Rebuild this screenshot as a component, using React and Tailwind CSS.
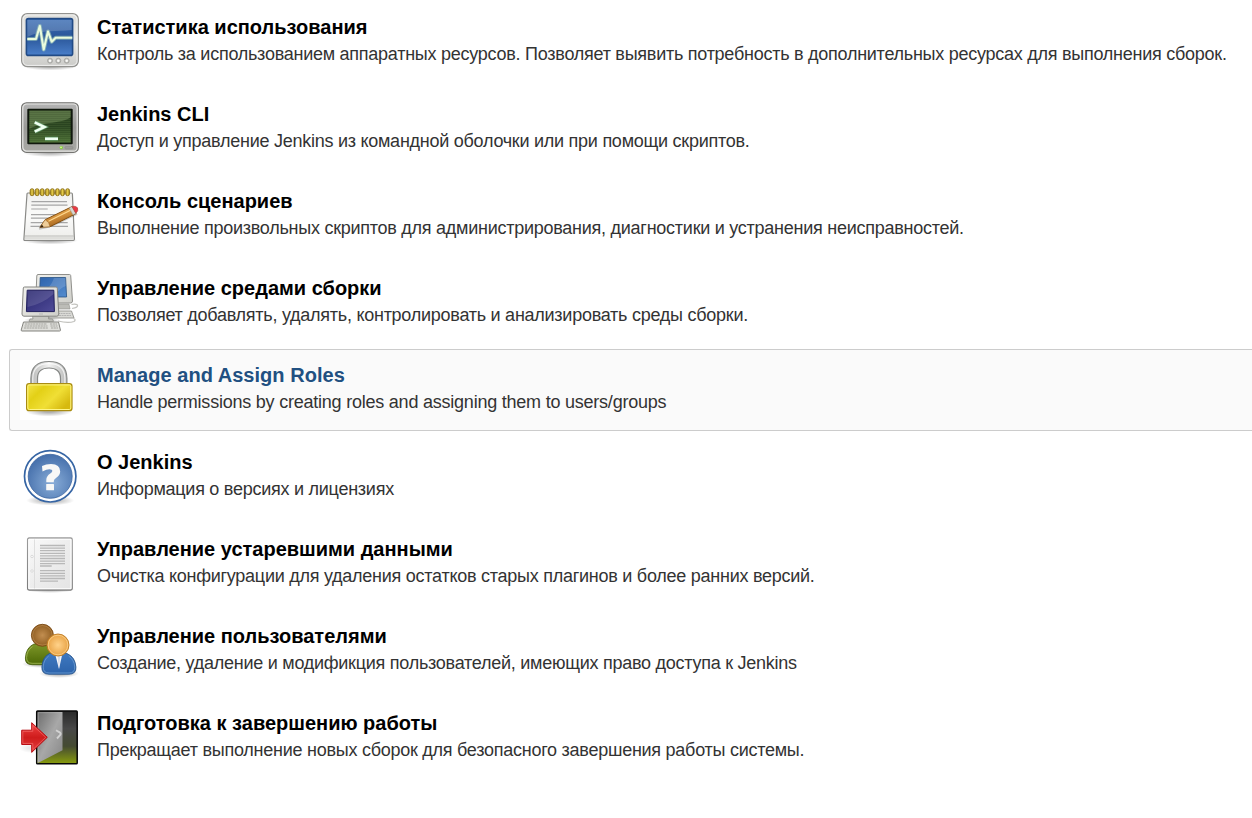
import React from 'react';

function Gradient({ id, stops, x1 = 0, y1 = 0, x2 = 0, y2 = 1 }) {
  return (
    <linearGradient id={id} x1={x1} y1={y1} x2={x2} y2={y2}>
      {stops.map((c, i) => (
        <stop key={i} offset={i / (stops.length - 1)} stopColor={c} />
      ))}
    </linearGradient>
  );
}

function Icon({ id, children, className = '' }) {
  return (
    <span className={`block h-[60px] w-[60px] shrink-0 ${className}`}>
      <svg viewBox="0 0 60 60" className="block h-[60px] w-[60px] blur-[0.4px]" aria-hidden="true">
        <defs>
          <radialGradient id={`${id}-shadow`}>
            <stop offset="0.2" stopColor="#000" stopOpacity="0.3" />
            <stop offset="1" stopColor="#000" stopOpacity="0" />
          </radialGradient>
        </defs>
        {children}
      </svg>
    </span>
  );
}

function MonitorIcon() {
  return (
    <Icon id="mon">
      <defs>
        <Gradient id="mon-frame" stops={['#dededb', '#e9e9e6', '#cbcbc8']} />
        <Gradient id="mon-screen" stops={['#3a6db4', '#2a5699', '#4a7fca']} />
      </defs>
      <ellipse cx="30" cy="54.5" rx="27" ry="4" fill="url(#mon-shadow)" />
      <rect x="1.7" y="1.7" width="56.6" height="52.9" rx="5.5" fill="url(#mon-frame)" stroke="#92928f" strokeWidth="1.3" />
      <rect x="2.9" y="2.9" width="54.2" height="50.5" rx="4.5" fill="none" stroke="#fff" strokeOpacity="0.7" />
      <rect x="6.4" y="6.6" width="46.2" height="36.8" rx="2" fill="url(#mon-screen)" stroke="#214a85" strokeWidth="1.6" />
      <path d="M7.3 8h44.4v10C38 20 22 17 7.3 25z" fill="#fff" opacity="0.18" />
      <path d="M7.3 27H16l3.8-13 3.9 23.5L28 19.500l3.700 10.200 4-4h16.600" fill="none" stroke="#a9d5bd" strokeOpacity="0.55" strokeWidth="4" strokeLinejoin="round" />
      <path d="M7.3 27H16l3.8-13 3.9 23.5L28 19.500l3.700 10.200 4-4h16.600" fill="none" stroke="#eafbdc" strokeWidth="2.1" strokeLinejoin="round" />
      {[30, 38.3, 46.7].map((x) => (
        <g key={x}>
          <circle cx={x} cy="48.7" r="2.5" fill="#bcbcb8" stroke="#a2a29f" strokeWidth="0.8" />
          <circle cx={x} cy="48.7" r="1.3" fill="#fafaf8" />
        </g>
      ))}
    </Icon>
  );
}

function TerminalIcon() {
  return (
    <Icon id="term">
      <defs>
        <Gradient id="term-frame" stops={['#b4b4b4', '#9b9b98', '#a9a9a5']} />
        <Gradient id="term-screen" stops={['#2b421f', '#2a4420', '#4a6c34']} />
        <pattern id="term-lines" width="3" height="2" patternUnits="userSpaceOnUse">
          <rect width="3" height="0.8" fill="#9bbd74" opacity="0.13" />
        </pattern>
      </defs>
      <ellipse cx="30" cy="53.5" rx="28" ry="4.5" fill="url(#term-shadow)" />
      <rect x="1.6" y="3.8" width="56.8" height="49.6" rx="5" fill="url(#term-frame)" stroke="#747471" strokeWidth="1.2" />
      <rect x="2.8" y="5" width="54.4" height="47.2" rx="4" fill="none" stroke="#e6e6e4" strokeWidth="1.2" />
      <rect x="7.3" y="9.7" width="45.4" height="35.6" rx="1" fill="#10180d" />
      <rect x="9.3" y="11.6" width="41.4" height="32" fill="url(#term-screen)" />
      <rect x="9.3" y="11.6" width="41.4" height="32" fill="url(#term-lines)" />
      <path d="M9.3 11.6h41.4V18C43 25 23 22 9.3 30z" fill="#c2df9b" opacity="0.25" />
      <path d="M14.7 23.3l9.800 4.700-9.800 4.700M25 39.700h13" fill="none" stroke="#78c08d" strokeOpacity="0.6" strokeWidth="4" />
      <path d="M14.7 23.3l9.800 4.700-9.800 4.700M25 39.700h13" fill="none" stroke="#f0fff2" strokeWidth="2.6" />
      <circle cx="41.3" cy="48.6" r="1.7" fill="#84ce38" />
      <circle cx="41" cy="48.4" r="0.8" fill="#dcffad" />
      <rect x="45" y="47.5" width="8" height="2.500" rx="1" fill="#9c9c99" stroke="#8b8b88" strokeWidth="0.6" />
    </Icon>
  );
}

function NotepadIcon() {
  return (
    <Icon id="pad">
      <defs>
        <Gradient id="pad-paper" stops={['#f1f1ef', '#fbfbfa', '#ececea']} />
        <Gradient id="pad-ring" x2={1} y2={0} stops={['#a58a1c', '#e6cc4c', '#9a7c14']} />
        <Gradient id="pad-pencil" x2={0.5} y2={1} stops={['#f4b95c', '#dc9a43', '#9e5d19']} />
      </defs>
      <ellipse cx="30" cy="54.500" rx="28" ry="4" fill="url(#pad-shadow)" />
      <path d="M7.800 7h43.700q.8 0 .9 1l2 45q0 1.500-1.200 1.500H5Q3.700 54.500 3.900 53L7 8q0-1 .8-1z" fill="url(#pad-paper)" stroke="#8a8a87" strokeWidth="1.200" />
      <path d="M4.800 50h48.800" stroke="#b4b4b1" strokeWidth="0.9" />
      <path d="M5 51h48.500v2.500H4.800z" fill="#dededb" />
      <path d="M11.500 15.700h35.500M11.300 19.100h36.200M11.200 23h16.500M11 28.700h36M10.900 32.200h35M10.700 36.700h37M10.500 40.400h37.500" stroke="#a6a6a6" strokeWidth="1.200" />
      {[0, 1, 2, 3, 4, 5, 6, 7].map((n) => (
        <rect key={n} x={10.100 + n * 5.080} y="2.700" width="3.900" height="7" rx="1.900" fill="url(#pad-ring)" stroke="#86690f" strokeWidth="0.8" />
      ))}
      <path d="M19 42.500q8-1 17-5L57 27.500" fill="none" stroke="#000" strokeOpacity="0.2" strokeWidth="2.500" />
      <path d="M20 41.200l5.200-7.500L52 20.600l4 7L30 40.700z" fill="url(#pad-pencil)" stroke="#855011" strokeWidth="1" />
      <path d="M20 41.200l5.200-7.500 3.300 2.700 1.500 4.300z" fill="#efce9a" stroke="#9d6a30" strokeWidth="0.5" />
      <path d="M19.700 41.600l2.300-3.200 1.500 2.500z" fill="#38250f" />
      <path d="M28.500 35.200l22.500-11.200" stroke="#ffd990" strokeWidth="1.200" />
      <path d="M49.200 22l3-1.500 3.800 6.800-3 1.600z" fill="#d7d7d2" stroke="#95958f" strokeWidth="0.5" />
      <path d="M52 20.600q3.500-1.300 5.500 1.200 1.200 3-1.700 5.500z" fill="#ec3945" stroke="#aa4b40" strokeWidth="0.7" />
    </Icon>
  );
}

function ComputersIcon() {
  return (
    <Icon id="pcs">
      <defs>
        <Gradient id="pcs-frame" x2={1} stops={['#f0f0ec', '#cfcfca']} />
        <Gradient id="pcs-blue" x2={1} stops={['#2f64ad', '#548cce']} />
        <Gradient id="pcs-navy" x2={1} stops={['#26246d', '#504c98']} />
      </defs>
      <path d="M52 35.500q6.500-1 5.500-3.500-2-1.500-6-.500" fill="none" stroke="#c3c3bf" strokeWidth="1.200" />
      <path d="M28 38h23.500l2.500 7H29z" fill="#dadad6" stroke="#93938f" strokeWidth="0.9" />
      <path d="M38 40.500h13M39 42.500h12" stroke="#aaa" strokeWidth="0.8" strokeDasharray="2 0.600" />
      <path d="M36 31h13l1 5H36z" fill="#bcbcb7" stroke="#8f8f8a" strokeWidth="0.6" />
      <path d="M18 1.500h31.500q1 0 1.200 1l1.800 25.500q0 2-2 2h-33q-2 0-1.800-2l1.100-25q0-1.500 1.200-1.500z" fill="url(#pcs-frame)" stroke="#8f8f8b" />
      <path d="M20.200 4.500H45.600l1 19.500H19.500z" fill="url(#pcs-blue)" stroke="#285385" strokeWidth="0.8" />
      <path d="M34 5h11.300l.5 8q-6 2-10 9H20l.5-3q10-3 13.500-14z" fill="#fff" opacity="0.15" />
      <path d="M38 48q10 2.500 16 .500 2.500-2-.500-3" fill="none" stroke="#c0c0bc" strokeWidth="1.200" />
      <ellipse cx="22" cy="47" rx="18" ry="3" fill="url(#pcs-shadow)" />
      <path d="M12.500 43h16v3h4l1 2.300H9l1-2.300h3z" fill="#c7c7c2" stroke="#888883" strokeWidth="0.7" />
      <path d="M4.600 14h31.400q1.200 0 1.300 1.200l1.500 25.800q0 2.200-2 2.200H4q-2 0-2-2.200L3.300 15q0-1 1.300-1z" fill="url(#pcs-frame)" stroke="#858581" />
      <path d="M7.200 17.200h26.600l.600 21.400H6.400z" fill="url(#pcs-navy)" stroke="#201e5c" strokeWidth="1" />
      <path d="M7.500 34q15-3 26-13V18H7.500z" fill="#fff" opacity="0.13" />
      <path d="M19 41h4" stroke="#aaa" strokeWidth="0.7" />
      <path d="M3.500 49h35l2 8.300q0 .700-1 .700h-37.500q-1 0-.800-1z" fill="#e0e0dc" stroke="#83837e" strokeWidth="1" />
      <path d="M5 51h22M4.500 53h23M4 55h24M30 51h7M30.500 53h7M31 55h7" stroke="#a3a39e" strokeWidth="1" strokeDasharray="2.200 0.500" />
    </Icon>
  );
}

function LockIcon() {
  return (
    <Icon id="lock" className="bg-white">
      <defs>
        <Gradient id="lock-body" x2={1} y2={0.6} stops={['#f5e64c', '#e3d016', '#f0df35', '#d6b90f']} />
        <Gradient id="lock-shackle" x2={1} y2={0} stops={['#b7b8b7', '#f3f3f2', '#b9bab9']} />
      </defs>
      <ellipse cx="29" cy="51.500" rx="23" ry="5" fill="url(#lock-shadow)" />
      <path d="M10.900 24V18.500C11 7 18 1.500 29 1.500S46.800 7 46.900 18.500V24H40.500V18.500C40.500 11 36 8 29 8s-11.500 3-11.500 10.500V24z" fill="url(#lock-shackle)" stroke="#868886" strokeWidth="1.200" />
      <path d="M12.800 23V18C13 8 19 3.600 29 3.600S44.600 8 44.900 18v5" fill="none" stroke="#fff" strokeOpacity="0.75" strokeWidth="1.200" />
      <rect x="6.600" y="23.700" width="45.400" height="27" rx="2.500" fill="url(#lock-body)" stroke="#a98c12" strokeWidth="1.200" />
      <rect x="7.800" y="24.900" width="43" height="24.600" rx="1.500" fill="none" stroke="#fff688" strokeWidth="1" />
    </Icon>
  );
}

function HelpIcon() {
  return (
    <Icon id="help">
      <defs>
        <radialGradient id="help-blue" cx="0.55" cy="0.65" r="0.65">
          <stop stopColor="#89add8" />
          <stop offset="1" stopColor="#456fab" />
        </radialGradient>
      </defs>
      <ellipse cx="30.300" cy="53.500" rx="24" ry="5" fill="url(#help-shadow)" />
      <circle cx="30.200" cy="29.300" r="25.700" fill="#fff" stroke="#3665a4" strokeWidth="1.700" />
      <circle cx="30.200" cy="29.300" r="22" fill="url(#help-blue)" stroke="#3b659f" strokeWidth="0.8" />
      <path d="M22 18.900q4-2 9-2 9.200 0 9.200 7.600 0 3.600-4.200 6.500-2.200 1.500-2.200 2.900v1.300H26.300v-2.300q0-3.700 4-6.300 2-1.300 2-2.500 0-1.900-2.800-1.900-2.900 0-7 2.200z" fill="#f8f8f7" />
      <rect x="26.200" y="37" width="7.800" height="6.300" rx="0.500" fill="#f8f8f7" />
    </Icon>
  );
}

function DocumentIcon() {
  return (
    <Icon id="doc">
      <defs>
        <Gradient id="doc-paper" x2={1} stops={['#fafafa', '#ededed', '#e4e4e4']} />
        <Gradient id="doc-edge" stops={['#9c9c9c', '#7b7b7b']} />
      </defs>
      <ellipse cx="30" cy="55.500" rx="25" ry="3.500" fill="url(#doc-shadow)" />
      <rect x="7.600" y="4" width="44.600" height="52" rx="1.500" fill="url(#doc-paper)" stroke="url(#doc-edge)" strokeWidth="1.300" />
      <rect x="8.800" y="5.200" width="42.200" height="49.600" rx="0.800" fill="none" stroke="#fff" strokeWidth="1.100" />
      <path d="M14.500 5.500v49" stroke="#d4d4d4" strokeWidth="0.7" />
      {[22.500, 37].map((y) => (
        <circle key={y} cx="12" cy={y} r="1.200" fill="#fff" stroke="#ccc" strokeWidth="0.7" />
      ))}
      <path d="M20 11.500h25M20 14.100h25M20 16.700h25M20 19.300h25M20 21.900h25M20 24.500h25M20 27.100h25M20 29.700h25M20 32h11.700M20 36.700h25M20 39.300h25M20 41.900h25M20 44.500h25M20 47.100h18" stroke="#b8b8b8" strokeWidth="1.300" />
    </Icon>
  );
}

function UsersIcon() {
  return (
    <Icon id="users">
      <defs>
        <radialGradient id="users-brown">
          <stop stopColor="#c28e50" />
          <stop offset="1" stopColor="#905e22" />
        </radialGradient>
        <radialGradient id="users-orange">
          <stop stopColor="#ffd28a" />
          <stop offset="1" stopColor="#e8a244" />
        </radialGradient>
        <Gradient id="users-green" stops={['#7d9628', '#4c6805']} />
        <Gradient id="users-blue" stops={['#3e78bf', '#2c63ab']} />
      </defs>
      <ellipse cx="22" cy="43" rx="20" ry="4" fill="url(#users-shadow)" />
      <ellipse cx="39" cy="52.500" rx="20" ry="4.500" fill="url(#users-shadow)" />
      <path d="M14 23q-8 3.500-8.600 14-.400 6.700 7 6.700h21q7 0 6.500-7Q39 26 29 23z" fill="url(#users-green)" stroke="#4e6613" strokeWidth="0.9" />
      <path d="M12.500 25.500q-5.700 4-5.900 11-.100 5.800 5.500 5.800h13" fill="none" stroke="#a6bd5a" strokeWidth="0.8" />
      <circle cx="22.400" cy="14.300" r="11" fill="url(#users-brown)" stroke="#7a4a13" strokeWidth="0.9" />
      <circle cx="22.400" cy="14.300" r="9.800" fill="none" stroke="#d5a56b" strokeOpacity="0.5" strokeWidth="0.8" />
      <path d="M29.500 32.500q-7 3.500-7.600 13.500-.400 7.200 7 7.200h20q7.500 0 7-7.200-.700-10-9-13.500z" fill="url(#users-blue)" stroke="#28558b" strokeWidth="0.9" />
      <path d="M28.700 35q-5.200 4-5.500 11-.100 6 5.800 6h20q6 0 5.700-6-.300-7-6-11" fill="none" stroke="#6797cf" strokeWidth="0.9" />
      <path d="M35.500 34.500h6.500L39 48z" fill="#f8f8fa" />
      <path d="M37.500 34.500h3L39.700 39 39 48l-1-9z" fill="#d5dae7" />
      <circle cx="38" cy="24" r="11" fill="url(#users-orange)" stroke="#bd7c24" strokeWidth="0.9" />
      <circle cx="38" cy="24" r="9.800" fill="none" stroke="#ffdb9c" strokeOpacity="0.8" strokeWidth="0.8" />
    </Icon>
  );
}

function ExitIcon() {
  return (
    <Icon id="exit">
      <defs>
        <Gradient id="exit-room" stops={['#292929', '#484848', '#454b32', '#899d0d']} />
        <Gradient id="exit-leaf" x2={1} stops={['#6e6e6e', '#a8a8a8', '#858585']} />
        <Gradient id="exit-arrow" stops={['#f04545', '#cf1c1c', '#e24040']} />
      </defs>
      <rect x="16.700" y="3" width="40.500" height="52.800" rx="0.800" fill="url(#exit-room)" stroke="#080808" strokeWidth="1.500" />
      <path d="M17.500 4h25v38.300l-25 13z" fill="url(#exit-leaf)" />
      <path d="M18.200 54V4.700H42" fill="none" stroke="#c2c2c2" strokeOpacity="0.5" strokeWidth="0.8" />
      <path d="M36 22.300l4 2.300q1 .800.500 2L37 30.500" fill="none" stroke="#d2d2d2" strokeWidth="1.900" />
      <ellipse cx="11" cy="40" rx="12" ry="5" fill="url(#exit-shadow)" opacity="0.3" />
      <path d="M1.700 22.200h10v-7.500l15.600 14.600L11.700 44.400v-7.900h-10z" fill="url(#exit-arrow)" stroke="#b90e14" strokeWidth="1" strokeLinejoin="round" />
      <path d="M2.800 35.400V23.300h10v-6l12.900 12-12.900 12.400v-6.300z" fill="none" stroke="#ff8a87" strokeOpacity="0.6" strokeWidth="0.8" />
    </Icon>
  );
}

const items = [
  { icon: MonitorIcon, title: 'Статистика использования', text: 'Контроль за использованием аппаратных ресурсов. Позволяет выявить потребность в дополнительных ресурсах для выполнения сборок.' },
  { icon: TerminalIcon, title: 'Jenkins CLI', text: 'Доступ и управление Jenkins из командной оболочки или при помощи скриптов.' },
  { icon: NotepadIcon, title: 'Консоль сценариев', text: 'Выполнение произвольных скриптов для администрирования, диагностики и устранения неисправностей.' },
  { icon: ComputersIcon, title: 'Управление средами сборки', text: 'Позволяет добавлять, удалять, контролировать и анализировать среды сборки.' },
  { icon: LockIcon, title: 'Manage and Assign Roles', text: 'Handle permissions by creating roles and assigning them to users/groups', active: true },
  { icon: HelpIcon, title: 'О Jenkins', text: 'Информация о версиях и лицензиях' },
  { icon: DocumentIcon, title: 'Управление устаревшими данными', text: 'Очистка конфигурации для удаления остатков старых плагинов и более ранних версий.' },
  { icon: UsersIcon, title: 'Управление пользователями', text: 'Создание, удаление и модификция пользователей, имеющих право доступа к Jenkins' },
  { icon: ExitIcon, title: 'Подготовка к завершению работы', text: 'Прекращает выполнение новых сборок для безопасного завершения работы системы.' },
];

export default function App() {
  return (
    <main className="h-[818px] w-full overflow-hidden bg-white pl-[9px] pt-px font-['Liberation_Sans',Arial,sans-serif]">
      <ul className="flex flex-col gap-[5px]">
        {items.map(({ icon: Glyph, title, text, active }) => (
          <li key={title}>
            <a
              className={`flex h-[82px] gap-[17px] whitespace-nowrap rounded-l-[3px] border border-r-0 pl-2.5 pt-2.5 ${
                active ? 'border-[#cccccc] bg-[#fafafa]' : 'border-transparent'
              }`}
            >
              <Glyph />
              <div className="pt-[2px]">
                <h2 className={`text-[20px] font-bold leading-[27px] ${active ? 'tracking-[0.03px] text-[#215081]' : 'text-black'}`}>{title}</h2>
                <p className={`text-[18px] leading-[27px] text-[#333333] ${active ? 'tracking-[-0.225px]' : 'tracking-[-0.258px]'}`}>{text}</p>
              </div>
            </a>
          </li>
        ))}
      </ul>
    </main>
  );
}
